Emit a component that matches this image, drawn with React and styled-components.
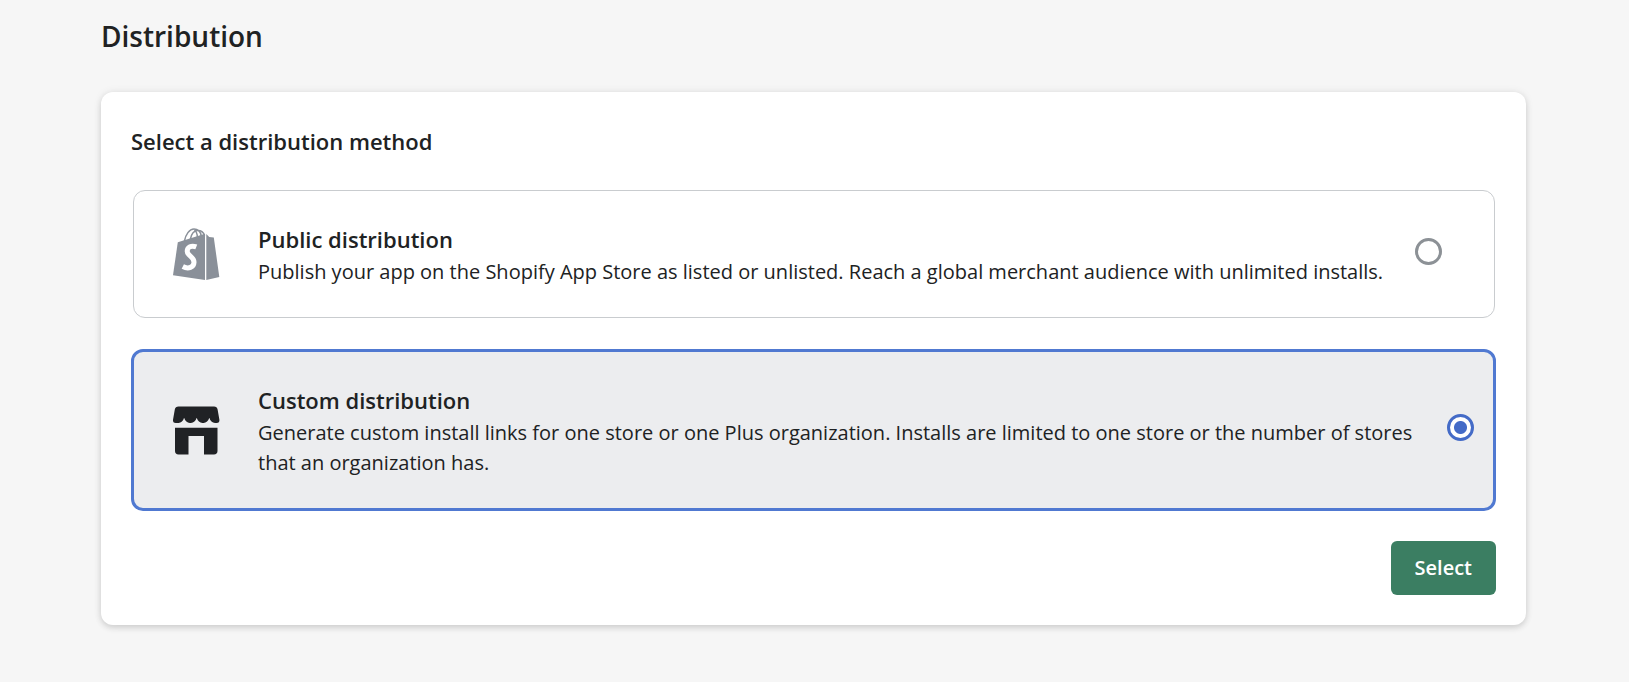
import React, { useState } from "react";
import styled, { createGlobalStyle, css } from "styled-components";

const GlobalStyle = createGlobalStyle`
  *, *::before, *::after {
    box-sizing: border-box;
  }

  body {
    margin: 0;
    background: #f6f6f6;
    color: #202223;
    font-family: "Segoe UI", "Open Sans", sans-serif;
    font-size: 20px;
    line-height: 30px;
  }
`;

const Page = styled.main`
  padding: 16px 103px 56px 101px;
`;

const PageTitle = styled.h1`
  margin: 0 0 36px;
  font-size: 28px;
  font-weight: 600;
  line-height: 40px;
`;

const Card = styled.form`
  display: flex;
  flex-direction: column;
  gap: 30px;
  padding: 30px;
  border-radius: 12px;
  background: #ffffff;
  box-shadow: 0 0 8px rgba(23, 24, 24, 0.08), 0 3px 6px rgba(0, 0, 0, 0.12);
`;

const CardTitle = styled.h2`
  margin: 0;
  font-size: 22px;
  font-weight: 600;
  line-height: 38px;
`;

const Options = styled.div`
  display: flex;
  flex-direction: column;
  gap: 31px;
`;

const Option = styled.label`
  display: flex;
  align-items: center;
  padding: 30px 19px 30px 36px;
  border-radius: 12px;
  cursor: pointer;

  ${({ $selected }) =>
    $selected
      ? css`
          border: 3px solid #5079d1;
          background: #ecedef;
        `
      : css`
          margin: 0 1px 0 2px;
          padding-right: 52px;
          border: 1px solid #c9cccf;
          background: #ffffff;
        `}
`;

const OptionIcon = styled.span`
  display: flex;
  flex: none;
  margin-right: 35px;
  color: ${({ $muted }) => ($muted ? "#8a9099" : "#202225")};

  svg {
    width: 53px;
    height: 53px;
  }
`;

const OptionText = styled.span`
  display: flex;
  flex: 1;
  flex-direction: column;
  min-width: 0;
`;

const OptionTitle = styled.span`
  font-size: 22px;
  font-weight: 600;
  line-height: 36px;
`;

const Radio = styled.input.attrs({ type: "radio" })`
  appearance: none;
  flex: none;
  width: 27px;
  height: 27px;
  margin: 0 0 5px 20px;
  border: 3px solid #8c9196;
  border-radius: 50%;
  background: #ffffff;
  cursor: pointer;

  &:checked {
    border-color: #446bc7;
    background: radial-gradient(circle, #446bc7 6px, #ffffff 7px);
  }
`;

const Actions = styled.div`
  display: flex;
  justify-content: flex-end;
`;

const SelectButton = styled.button`
  padding: 12px 24px;
  border: 0;
  border-radius: 6px;
  background: #3b7e62;
  color: #ffffff;
  font: inherit;
  font-weight: 600;
  cursor: pointer;
`;

function BagIcon() {
  return (
    <svg viewBox="0 0 53 53" aria-hidden="true">
      <g fill="none" stroke="currentColor" strokeWidth="1.5">
        <path d="M14.300 13.500C15.500 6.500 19.500 1 24 1c4.200 0 6.500 3 7.300 7" />
        <path d="M20.300 11.500C21.200 6.500 24 2.800 27.300 2.500c4-.3 6.200 2 7.400 5" />
        <path d="M24.500 2c2 1.500 2.800 4 2.900 7.500" />
      </g>
      <path fill="currentColor" d="M7.800 14.300 35 5.800V52L3 47.300z" />
      <path fill="currentColor" d="M36.300 6l2.900 3 4.600.4L49.300 49l-13 3z" />
      <path
        d="M26.300 18.900C21.500 17 17.200 18.900 17.200 23.200C17.200 28 24.200 28.500 24 34.300C23.800 39.200 18.500 41.500 12.800 38.600"
        fill="none"
        stroke="#ffffff"
        strokeWidth="5"
      />
    </svg>
  );
}

function StoreIcon() {
  return (
    <svg viewBox="0 0 53 53" fill="currentColor" aria-hidden="true">
      <path d="M8.500 2.500H44c2 0 3.300 1.200 3.600 3l1.800 10.200c.3 2-.8 3.300-2.800 3.300h-1.600c-2.700 0-4.700-2-5.700-5.200-1 3.200-3.200 5.200-5.700 5.200h-1.200c-2.500 0-4.700-2-5.700-5.200-1 3.200-3.200 5.200-5.700 5.200h-1.200c-2.500 0-4.700-2-5.700-5.200C13.100 17 11.200 19 8.500 19H5.800c-2 0-3.100-1.300-2.800-3.300L4.800 5.500c.3-1.800 1.700-3 3.700-3z" />
      <path d="M5 23.800h42.500V47c0 2.200-1.300 3.500-3.500 3.500H34V32H18.500v18.500h-10C6.300 50.500 5 49.200 5 47z" />
    </svg>
  );
}

const METHODS = [
  {
    id: "public",
    title: "Public distribution",
    description:
      "Publish your app on the Shopify App Store as listed or unlisted. Reach a global merchant audience with unlimited installs.",
    icon: <BagIcon />,
    muted: true,
  },
  {
    id: "custom",
    title: "Custom distribution",
    description:
      "Generate custom install links for one store or one Plus organization. Installs are limited to one store or the number of stores that an organization has.",
    icon: <StoreIcon />,
    muted: false,
  },
];

export default function App() {
  const [method, setMethod] = useState("custom");

  return (
    <>
      <GlobalStyle />
      <Page>
        <PageTitle>Distribution</PageTitle>
        <Card onSubmit={(event) => event.preventDefault()}>
          <CardTitle id="method-title">Select a distribution method</CardTitle>
          <Options role="radiogroup" aria-labelledby="method-title">
            {METHODS.map(({ id, title, description, icon, muted }) => (
              <Option key={id} htmlFor={id} $selected={method === id}>
                <OptionIcon $muted={muted}>{icon}</OptionIcon>
                <OptionText>
                  <OptionTitle>{title}</OptionTitle>
                  <span>{description}</span>
                </OptionText>
                <Radio
                  id={id}
                  name="method"
                  value={id}
                  checked={method === id}
                  onChange={() => setMethod(id)}
                />
              </Option>
            ))}
          </Options>
          <Actions>
            <SelectButton type="submit">Select</SelectButton>
          </Actions>
        </Card>
      </Page>
    </>
  );
}
